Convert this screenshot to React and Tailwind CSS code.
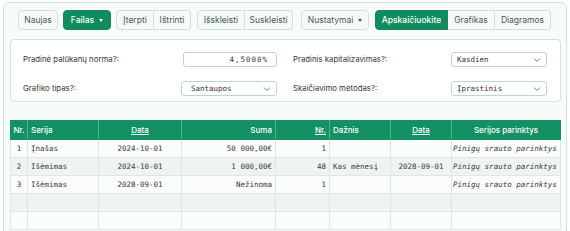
import React from "react";

const ui = "font-['Inter','Noto_Sans',sans-serif]";
const mono = "font-['DejaVu_Sans_Mono','Liberation_Mono',monospace]";

function Caret() {
  return <span className="ml-[5px] inline-block w-0 h-0 border-l-[2.5px] border-r-[2.5px] border-t-[3px] border-l-transparent border-r-transparent border-t-current" />;
}

function Chevron() {
  return (
    <svg width="8" height="6" viewBox="0 0 8 6" className="text-[#6b7a75]">
      <path d="M1 1.5 L4 4.5 L7 1.5" fill="none" stroke="currentColor" strokeWidth="1" />
    </svg>
  );
}

const btn = "h-[20px] flex items-center justify-center bg-[#f7faf9] text-[#3d5c51] border border-[#cfe3db]";
const green = "h-[20px] flex items-center justify-center bg-[#108c5e] text-white border border-[#108c5e] font-medium";

function Select({ value, pad = "pl-[5px]" }) {
  return (
    <div className={`h-[15px] w-[96px] flex items-center justify-between bg-white border border-[#bcd6cc] rounded-[3px] ${pad} pr-[5px] ${mono} text-[7.5px] text-[#333]`}>
      <span>{value}</span>
      <Chevron />
    </div>
  );
}

const cols = [17, 71, 83, 94, 54, 61, 61, 109];
const rows = [
  ["1", "Įnašas", "2024-10-01", "50 000,00€", "1", "", "", "Pinigų srauto parinktys"],
  ["2", "Išėmimas", "2024-10-01", "1 000,00€", "48", "Kas mėnesį", "2028-09-01", "Pinigų srauto parinktys"],
  ["3", "Išėmimas", "2028-09-01", "Nežinoma", "1", "", "", "Pinigų srauto parinktys"],
  ["", "", "", "", "", "", "", ""],
  ["", "", "", "", "", "", "", ""],
];
const align = ["text-center", "text-left", "text-center", "text-right", "text-right", "text-left", "text-center", "text-right"];

export default function App() {
  return (
    <div className={`w-[570px] h-[231px] overflow-hidden bg-white pl-[3px] pr-[3px] pt-[2px] ${ui}`}>
      <div className="h-[240px] border border-[#c9e6da] rounded-t-[6px] bg-[#f7fbfa] pl-[6px] pr-[5px] pt-[7px]">
        <div className="flex items-center pl-[8px] text-[8.5px]">
          <div className={`${btn} w-[40px] rounded-[4px]`}>Naujas</div>
          <div className={`${green} w-[48px] rounded-[4px] ml-[5px]`}>Failas<Caret /></div>
          <div className="flex ml-[5px]">
            <div className={`${btn} w-[38px] rounded-l-[4px]`}>Įterpti</div>
            <div className={`${btn} w-[37px] rounded-r-[4px] border-l-0`}>Ištrinti</div>
          </div>
          <div className="flex ml-[6px]">
            <div className={`${btn} w-[48px] rounded-l-[4px]`}>Išskleisti</div>
            <div className={`${btn} w-[48px] rounded-r-[4px] border-l-0`}>Suskleisti</div>
          </div>
          <div className={`${btn} w-[68px] rounded-[4px] ml-[8px]`}>Nustatymai<Caret /></div>
          <div className="flex ml-[6px]">
            <div className={`${green} w-[73px] rounded-l-[4px]`}>Apskaičiuokite</div>
            <div className={`${btn} w-[47px] border-l-0`}>Grafikas</div>
            <div className={`${btn} w-[56px] rounded-r-[4px] border-l-0`}>Diagramos</div>
          </div>
        </div>

        <div className="mt-[9px] w-[551px] h-[63px] bg-white border border-[#cfe3db] rounded-[4px] pl-[12px] pr-[13px] pt-[12px] grid grid-cols-2 gap-x-[16px] gap-y-[9px] text-[7.8px] text-[#2f3a36]">
          <div className="flex items-center justify-between h-[15px]">
            <span>Pradinė palūkanų norma?:</span>
            <div className={`h-[15px] w-[94px] flex items-center justify-end bg-white border border-[#bcd6cc] rounded-[3px] pr-[8px] ${mono} text-[7.5px] tracking-[1px] text-[#333]`}>4,5000%</div>
          </div>
          <div className="flex items-center justify-between h-[15px]">
            <span>Pradinis kapitalizavimas?:</span>
            <Select value="Kasdien" />
          </div>
          <div className="flex items-center justify-between h-[15px]">
            <span>Grafiko tipas?:</span>
            <Select value="Santaupos" pad="pl-[9px]" />
          </div>
          <div className="flex items-center justify-between h-[15px]">
            <span>Skaičiavimo metodas?:</span>
            <Select value="Įprastinis" />
          </div>
        </div>

        <table className="mt-[18px] table-fixed border-collapse w-[550px]">
          <colgroup>
            {cols.map((w, i) => <col key={i} style={{ width: w }} />)}
          </colgroup>
          <thead>
            <tr className="h-[19px] bg-[#139163] text-white text-[8px] font-medium">
              <th className="border border-[#139163] border-r-[#4fb38d] text-center font-medium">Nr.</th>
              <th className="border border-[#139163] border-r-[#4fb38d] text-left pl-[3px] font-medium">Serija</th>
              <th className="border border-[#139163] border-r-[#4fb38d] text-center font-medium"><span className="underline">Data</span></th>
              <th className="border border-[#139163] border-r-[#4fb38d] text-right pr-[3px] font-medium">Suma</th>
              <th className="border border-[#139163] border-r-[#4fb38d] text-right pr-[3px] font-medium"><span className="underline">Nr.</span></th>
              <th className="border border-[#139163] border-r-[#4fb38d] text-left pl-[3px] font-medium">Dažnis</th>
              <th className="border border-[#139163] border-r-[#4fb38d] text-center font-medium"><span className="underline">Data</span></th>
              <th className="border border-[#139163] text-center font-medium">Serijos parinktys</th>
            </tr>
          </thead>
          <tbody className={`${mono} text-[7.5px] text-[#3a3a3a]`}>
            {rows.map((r, i) => (
              <tr key={i} className={`h-[18px] ${i % 2 === 1 ? "bg-[#eef4f1]" : "bg-[#fbfcfc]"}`}>
                {r.map((c, j) => (
                  <td key={j} className={`border border-[#dde7e3] whitespace-nowrap overflow-hidden ${align[j]} ${j === 7 ? "italic pl-[1px] pr-[4px]" : "px-[3px]"}`}>{c}</td>
                ))}
              </tr>
            ))}
          </tbody>
        </table>
      </div>
    </div>
  );
}
